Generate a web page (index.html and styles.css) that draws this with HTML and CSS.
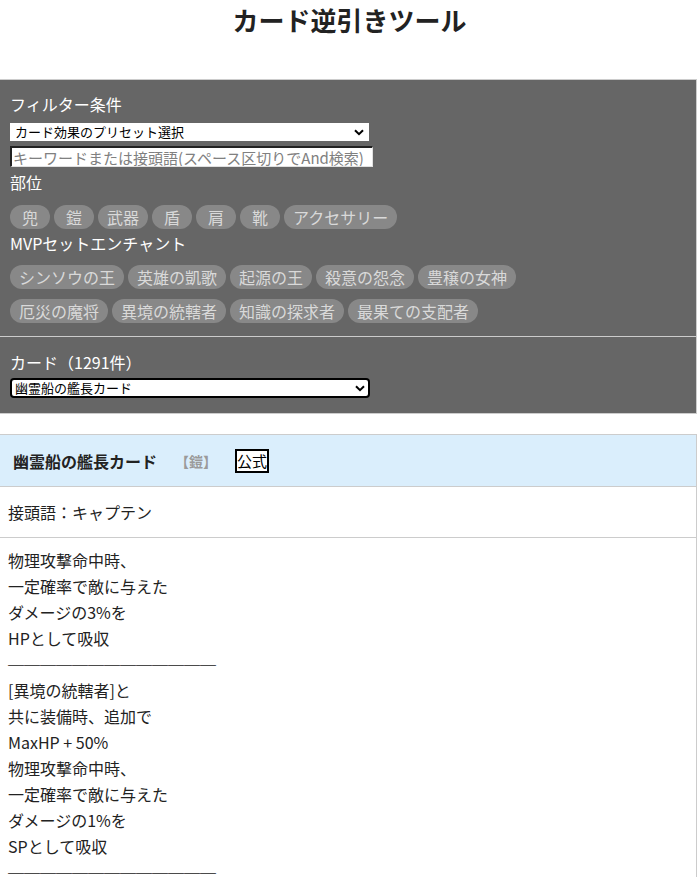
FILE: index.html
```html
<!DOCTYPE html>
<html lang="ja">
<head>
<meta charset="utf-8">
<title>カード逆引きツール</title>
<link rel="stylesheet" href="styles.css">
</head>
<body>
<h1 class="title">カード逆引きツール</h1>

<section class="panel">
  <div class="filter">
    <p class="label">フィルター条件</p>
    <div class="select-wrap preset">
      <select class="select">
        <option>カード効果のプリセット選択</option>
      </select>
      <svg class="chev" width="10" height="7" viewBox="0 0 10 7"><path d="M1 1.2 L5 5.2 L9 1.2" fill="none" stroke="#000" stroke-width="2"/></svg>
    </div>
    <input class="keyword" type="text" placeholder="キーワードまたは接頭語(スペース区切りでAnd検索)">
    <p class="label label-gap">部位</p>
    <div class="chips chips-first">
      <span class="chip">兜</span>
      <span class="chip">鎧</span>
      <span class="chip">武器</span>
      <span class="chip">盾</span>
      <span class="chip">肩</span>
      <span class="chip">靴</span>
      <span class="chip">アクセサリー</span>
    </div>
    <p class="label label-mvp">MVPセットエンチャント</p>
    <div class="chips chips-mvp">
      <span class="chip">シンソウの王</span>
      <span class="chip">英雄の凱歌</span>
      <span class="chip">起源の王</span>
      <span class="chip">殺意の怨念</span>
      <span class="chip">豊穣の女神</span>
      <span class="chip">厄災の魔将</span>
      <span class="chip">異境の統轄者</span>
      <span class="chip">知識の探求者</span>
      <span class="chip">最果ての支配者</span>
    </div>
  </div>
  <div class="cardsec">
    <p class="label">カード（1291件）</p>
    <div class="select-wrap cardsel">
      <select class="select focused">
        <option>幽霊船の艦長カード</option>
      </select>
      <svg class="chev" width="10" height="7" viewBox="0 0 10 7"><path d="M1 1.2 L5 5.2 L9 1.2" fill="none" stroke="#000" stroke-width="2"/></svg>
    </div>
  </div>
</section>

<section class="card">
  <div class="card-head">
    <span class="card-name">幽霊船の艦長カード</span>
    <span class="card-slot">【鎧】</span>
    <span class="badge">公式</span>
  </div>
  <div class="prefix">接頭語：キャプテン</div>
  <div class="desc">
    物理攻撃命中時、<br>
    一定確率で敵に与えた<br>
    ダメージの3%を<br>
    HPとして吸収<br>
    ─────────────<br>
    [異境の統轄者]と<br>
    共に装備時、追加で<br>
    MaxHP + 50%<br>
    物理攻撃命中時、<br>
    一定確率で敵に与えた<br>
    ダメージの1%を<br>
    SPとして吸収<br>
    ─────────────
  </div>
</section>
</body>
</html>
```

FILE: styles.css
```css
body {
  margin: 0;
  font-family: "Noto Sans CJK JP", "Noto Sans", sans-serif;
  color: #222;
  background: #fff;
}

.title {
  margin: 0 0 39px;
  font-size: 26px;
  line-height: 40px;
  font-weight: bold;
  text-align: center;
  color: #222;
}

.panel {
  width: 697px;
  box-sizing: border-box;
  background: #666;
  border: 1px solid #ccc;
  border-left: 0;
  color: #fff;
}

.filter {
  padding: 13px 10px 13px;
}

.label {
  margin: 0;
  font-size: 16px;
  line-height: 22px;
  color: #fff;
}

.label-gap {
  margin-top: 4px;
}

.label-mvp {
  margin-top: 3px;
}

.select-wrap {
  position: relative;
}

.select {
  display: block;
  -webkit-appearance: none;
  appearance: none;
  box-sizing: border-box;
  background: #fff;
  color: #000;
  font-family: "Noto Sans CJK JP", sans-serif;
  font-size: 13px;
  line-height: 16px;
  padding: 0 0 0 4px;
  margin: 0;
  border: 1px solid #fff;
  border-radius: 0;
}

.preset {
  margin-top: 8px;
  width: 359px;
}

.preset .select {
  width: 359px;
  height: 18px;
}

.chev {
  position: absolute;
  right: 5px;
  top: 50%;
  margin-top: -3px;
}

.keyword {
  display: block;
  box-sizing: border-box;
  margin: 5px 0 0;
  width: 363px;
  height: 21px;
  padding: 0 1px;
  background: #fff;
  font-family: "Noto Sans CJK JP", sans-serif;
  font-size: 15px;
  line-height: 17px;
  border-style: solid;
  border-width: 2px 1px 1px 2px;
  border-color: #222 #e0e0e0 #e0e0e0 #222;
  outline: none;
}

.keyword::placeholder {
  color: #808080;
}

.chips {
  display: flex;
  flex-wrap: wrap;
  column-gap: 4px;
  row-gap: 10px;
  max-width: 560px;
}

.chips-first {
  margin-top: 12px;
}

.chips-mvp {
  margin-top: 11px;
}

.chip {
  display: inline-block;
  box-sizing: border-box;
  min-width: 40px;
  height: 24px;
  padding: 0 9px;
  border-radius: 12px;
  background: #888;
  color: #d9d9d9;
  font-size: 16px;
  line-height: 24px;
  text-align: center;
}

.cardsec {
  border-top: 1px solid #ccc;
  padding: 14px 10px 15px;
}

.cardsel {
  margin-top: 5px;
  width: 360px;
}

.cardsel .select {
  width: 360px;
  height: 20px;
  border: 2px solid #000;
  border-radius: 4px;
  padding-left: 3px;
}

.card {
  width: 697px;
  box-sizing: border-box;
  margin-top: 20px;
  border: 1px solid #ccc;
  border-left: 0;
}

.card-head {
  display: flex;
  align-items: center;
  gap: 18px;
  height: 51px;
  padding: 0 13px;
  background: #daeefc;
  border-bottom: 1px solid #ccc;
}

.card-name {
  font-size: 16px;
  font-weight: bold;
  color: #222;
}

.card-slot {
  font-size: 14px;
  font-weight: bold;
  color: #9a9a9a;
}

.badge {
  box-sizing: border-box;
  height: 24px;
  padding: 0;
  border: 2px solid #000;
  background: #fff;
  color: #000;
  font-size: 15px;
  line-height: 20px;
}

.prefix {
  display: flex;
  align-items: center;
  height: 50px;
  padding-left: 8px;
  font-size: 16px;
  color: #222;
  border-bottom: 1px solid #ccc;
}

.desc {
  padding: 9px 8px;
  font-size: 16px;
  line-height: 26px;
  color: #222;
}
```
